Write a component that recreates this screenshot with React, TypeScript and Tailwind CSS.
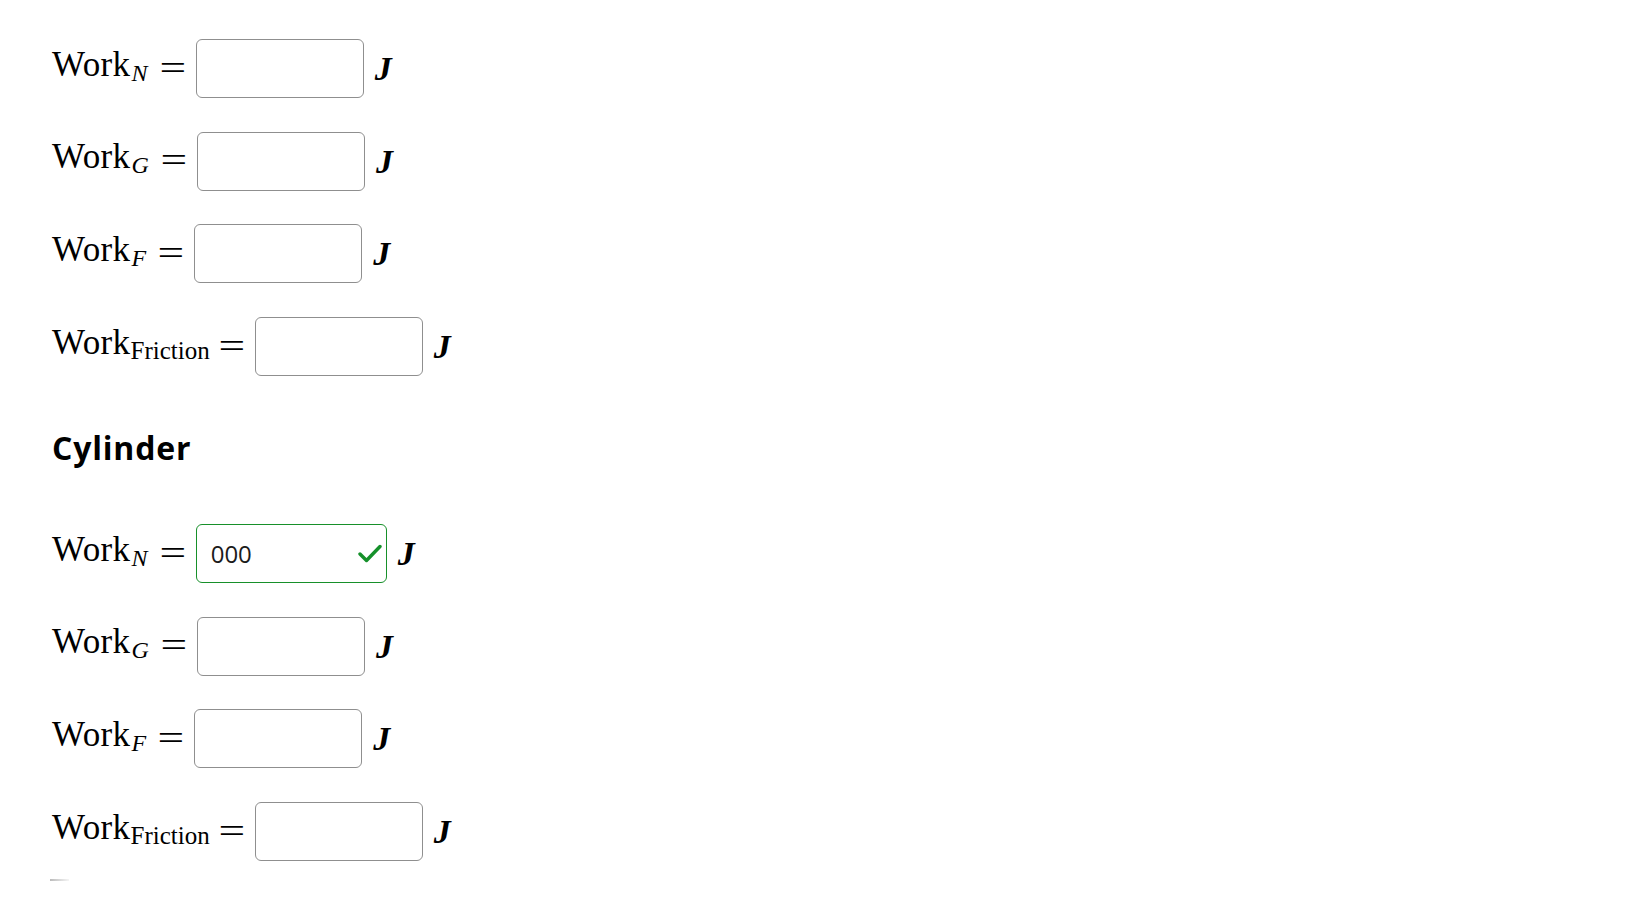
import React from 'react'

type Row = {
  sub: string
  italicSub: boolean
  value?: string
  correct?: boolean
}

const rows: Row[] = [
  { sub: 'N', italicSub: true },
  { sub: 'G', italicSub: true },
  { sub: 'F', italicSub: true },
  { sub: 'Friction', italicSub: false },
]

const cylinderRows: Row[] = [
  { sub: 'N', italicSub: true, value: '000', correct: true },
  { sub: 'G', italicSub: true },
  { sub: 'F', italicSub: true },
  { sub: 'Friction', italicSub: false },
]

function CheckIcon() {
  return (
    <svg width="24" height="19" viewBox="0 0 24 19" fill="none">
      <path
        d="M2 10 L8.5 16.5 L22 2.5"
        stroke="#15902a"
        strokeWidth="3.4"
        strokeLinecap="round"
        strokeLinejoin="round"
      />
    </svg>
  )
}

function WorkRow({ row }: { row: Row }) {
  return (
    <div className="flex items-center h-[59px]">
      <span className="font-['Liberation_Serif',serif] text-[35px] leading-[35px] tracking-[0.4px] text-black whitespace-nowrap">
        Work
        <span
          className={`align-[-5px] tracking-normal ${
            row.italicSub ? 'italic text-[24px] ml-[1px] mr-[3px]' : 'text-[25px]'
          }`}
        >
          {row.sub}
        </span>
        <span className="inline-block align-[-4px] scale-x-[1.35] ml-[12px] mr-[13px]">=</span>
      </span>
      {row.correct ? (
        <div className="flex items-center justify-between w-[191px] h-[59px] border-[1.5px] border-[#17902a] rounded-[6px] pl-[14px] pr-[4px] bg-white">
          <span className="font-['Open_Sans',sans-serif] text-[24px] text-[#1b1b1b]">
            {row.value}
          </span>
          <CheckIcon />
        </div>
      ) : (
        <div className="w-[168px] h-[59px] border-[1.5px] border-[#8f8f8f] rounded-[6px] bg-white" />
      )}
      <span className="ml-[11px] font-['Liberation_Serif',serif] italic font-bold text-[34px] leading-[35px] text-black">
        J
      </span>
    </div>
  )
}

export default function App() {
  return (
    <div className="min-h-screen bg-white pl-[52px] pt-[39px]">
      <div className="flex flex-col gap-[33.7px]">
        {rows.map((r, i) => (
          <WorkRow key={i} row={r} />
        ))}
      </div>

      <h3 className="mt-[51px] font-['Open_Sans',sans-serif] font-bold text-[32px] leading-[42px] tracking-[0.8px] text-black">
        Cylinder
      </h3>

      <div className="mt-[55px] flex flex-col gap-[33.7px]">
        {cylinderRows.map((r, i) => (
          <WorkRow key={i} row={r} />
        ))}
      </div>

      <div className="mt-[18px] -ml-[2px] h-[1.5px] w-[19px] bg-gradient-to-r from-[#bbbbbb] to-[#f5f5f5]" />
    </div>
  )
}
